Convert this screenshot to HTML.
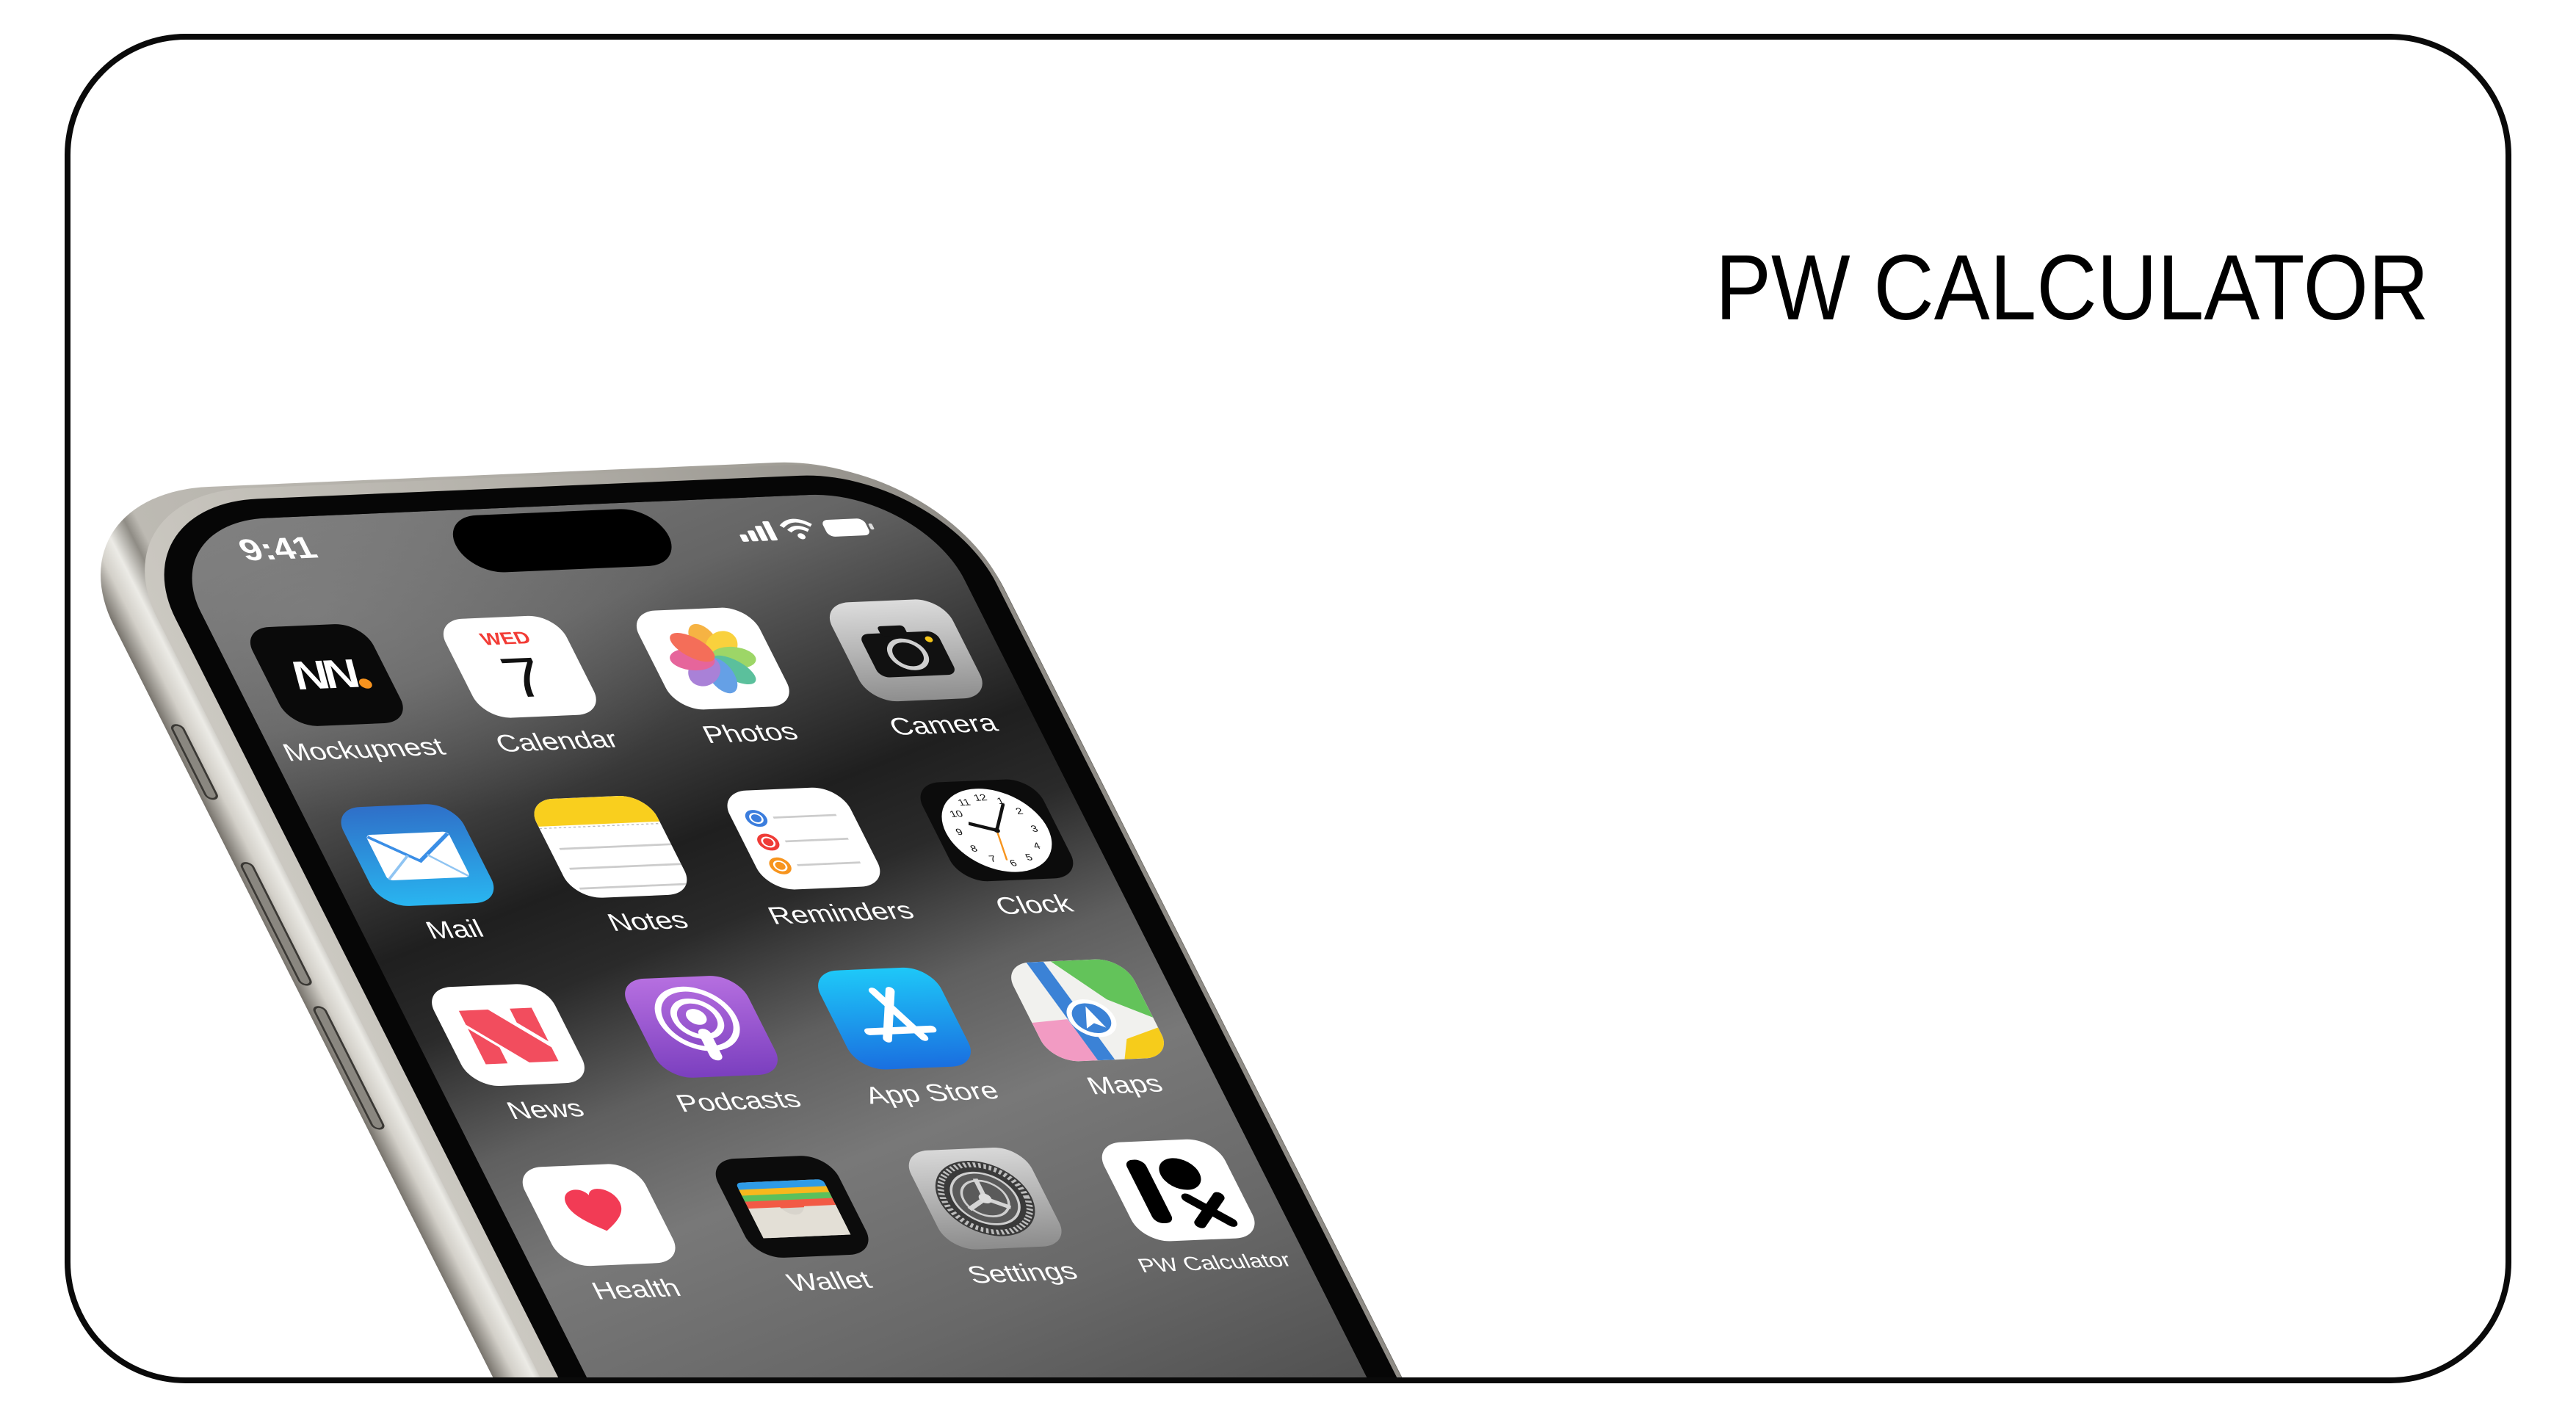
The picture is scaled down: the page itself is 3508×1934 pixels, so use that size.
<!DOCTYPE html>
<html><head><meta charset="utf-8"><style>
html,body{margin:0;padding:0;background:#fff;width:3508px;height:1934px;overflow:hidden;position:relative}
.frame{position:absolute;left:88px;top:46px;width:3332px;height:1838px;box-sizing:border-box;border:8px solid #0a0a0a;border-radius:165px;overflow:hidden;background:#fff}
.title{position:absolute;left:2240px;top:275px;font-family:"Liberation Sans",sans-serif;font-size:126px;line-height:1;color:#000;white-space:nowrap;transform:scaleX(0.905);transform-origin:0 0}
.phone{position:absolute;left:0;top:0;transform:matrix(1,-0.0427,0.412,0.817,116,658);transform-origin:0 0;font-family:"Liberation Sans",sans-serif}
.abs{position:absolute}
.body{left:-125px;top:-55px;width:1212px;height:1950px;border-radius:220px;background:linear-gradient(90deg,#77736c 0%,#d3d0c9 2.5%,#ecebe6 4.5%,#8f8c85 7%,#bdbab3 8.5%,#b0ada6 50%,#9a978f 97%,#6e6b65 100%)}
.rim{left:-62px;top:-50px;width:1148px;height:1950px;border-radius:205px;background:linear-gradient(90deg,#cbc8c1,#b3b0a9 50%,#8f8c86)}
.bezel{left:-38px;top:-32px;width:1118px;height:1900px;border-radius:190px;background:#060606}
.screen{left:0;top:0;width:1040px;height:1850px;border-radius:150px;overflow:hidden;
background:radial-gradient(ellipse 500px 350px at 150px 150px,rgba(140,140,140,.45),rgba(0,0,0,0)),linear-gradient(160deg,#7e7e7e 0%,#656565 16%,#404040 25%,#1f1f1f 33%,#2a2a2a 39%,#5f5f5f 48%,#787878 57%,#686868 70%,#4e4e4e 85%,#383838 100%)}
.ic{position:absolute;width:165px;height:165px;border-radius:38px;overflow:hidden}
.ic svg{width:100%;height:100%;display:block}
.lb{position:absolute;width:320px;text-align:center;color:#fff;font-size:40px;line-height:1;white-space:nowrap}
.btn{position:absolute;background:#8a8780;border:3px solid #3a3834;border-radius:10px;width:12px}
</style></head><body>
<div class="frame">
<div class="title">PW CALCULATOR</div>
<div class="phone">
  <div class="abs body"></div>
  <div class="btn" style="left:-118px;top:330px;height:120px"></div>
  <div class="btn" style="left:-118px;top:560px;height:200px"></div>
  <div class="btn" style="left:-118px;top:800px;height:200px"></div>
  <div class="abs rim"></div>
  <div class="abs bezel"></div>
  <div class="abs screen">
    <div class="abs" style="left:95px;top:22px;color:#fff;font-size:50px;font-weight:bold">9:41</div>
    <div class="abs" style="left:385px;top:10px;width:290px;height:95px;border-radius:48px;background:#000"></div>
    <svg class="abs" style="left:770px;top:30px" width="200" height="50" viewBox="0 0 200 50">
      <rect x="0" y="30" width="9" height="12" rx="2" fill="#fff"/><rect x="13" y="24" width="9" height="18" rx="2" fill="#fff"/><rect x="26" y="17" width="9" height="25" rx="2" fill="#fff"/><rect x="39" y="10" width="9" height="32" rx="2" fill="#fff"/>
      <path d="M62 20 Q82 2 102 20" stroke="#fff" stroke-width="6" fill="none"/><path d="M69 28 Q82 17 95 28" stroke="#fff" stroke-width="6" fill="none"/><circle cx="82" cy="37" r="5" fill="#fff"/>
      <rect x="118" y="12" width="58" height="28" rx="9" fill="#fff"/><rect x="179" y="21" width="5" height="10" rx="2" fill="#ddd"/>
    </svg>

    <div class="ic" style="left:43px;top:178px;background:#0a0a0a"><svg viewBox="0 0 100 100"><text x="47" y="63" text-anchor="middle" font-family="Liberation Sans" font-weight="bold" font-style="italic" font-size="40" fill="#fff" letter-spacing="-4">NN</text><circle cx="78" cy="60" r="5" fill="#f7931e"/></svg></div>
    <div class="lb" style="left:-35px;top:365px">Mockupnest</div>
    <div class="ic" style="left:306px;top:178px;background:#fff"><svg viewBox="0 0 100 100"><text x="50" y="27" text-anchor="middle" font-family="Liberation Sans" font-weight="bold" font-size="17" fill="#f23b35">WED</text><text x="50" y="80" text-anchor="middle" font-family="Liberation Sans" font-size="56" fill="#111">7</text></svg></div>
    <div class="lb" style="left:228px;top:365px">Calendar</div>
    <div class="ic" style="left:569px;top:178px;background:#fff"><svg viewBox="0 0 100 100"><g transform="translate(50 50)" opacity=".85">
      <ellipse cx="0" cy="-17" rx="11" ry="18" fill="#f5a623"/><ellipse cx="0" cy="-17" rx="11" ry="18" fill="#f8c91c" transform="rotate(45)"/><ellipse cx="0" cy="-17" rx="11" ry="18" fill="#8ccf4d" transform="rotate(90)"/><ellipse cx="0" cy="-17" rx="11" ry="18" fill="#3fb58b" transform="rotate(135)"/><ellipse cx="0" cy="-17" rx="11" ry="18" fill="#4a90e2" transform="rotate(180)"/><ellipse cx="0" cy="-17" rx="11" ry="18" fill="#9b6bd1" transform="rotate(225)"/><ellipse cx="0" cy="-17" rx="11" ry="18" fill="#e24b8a" transform="rotate(270)"/><ellipse cx="0" cy="-17" rx="11" ry="18" fill="#f2553d" transform="rotate(315)"/></g></svg></div>
    <div class="lb" style="left:491px;top:365px">Photos</div>
    <div class="ic" style="left:832px;top:178px;background:linear-gradient(180deg,#dcdcdc,#8e8e8e)"><svg viewBox="0 0 100 100"><rect x="18" y="32" width="64" height="44" rx="8" fill="#111"/><rect x="36" y="25" width="22" height="10" rx="3" fill="#111"/><circle cx="50" cy="54" r="14" fill="none" stroke="#cfcfcf" stroke-width="4"/><circle cx="73" cy="40" r="3" fill="#f5c518"/></svg></div>
    <div class="lb" style="left:754px;top:365px">Camera</div>

    <div class="ic" style="left:43px;top:478px;background:linear-gradient(180deg,#2f6fc8,#29b5f0)"><svg viewBox="0 0 100 100"><rect x="16" y="28" width="68" height="46" rx="4" fill="#fff"/><path d="M17 30 L50 56 L83 30" stroke="#3a8ee6" stroke-width="3" fill="none"/><path d="M17 73 L42 50 M83 73 L58 50" stroke="#8fc4f2" stroke-width="2" fill="none"/></svg></div>
    <div class="lb" style="left:-35px;top:665px">Mail</div>
    <div class="ic" style="left:306px;top:478px;background:#fff"><svg viewBox="0 0 100 100"><rect x="0" y="0" width="100" height="27" fill="#f9cf1e"/><line x1="0" y1="29" x2="100" y2="29" stroke="#bbb" stroke-width="1" stroke-dasharray="2 2"/><line x1="8" y1="50" x2="100" y2="50" stroke="#ccc" stroke-width="2"/><line x1="8" y1="70" x2="100" y2="70" stroke="#ccc" stroke-width="2"/><line x1="8" y1="90" x2="100" y2="90" stroke="#ccc" stroke-width="2"/></svg></div>
    <div class="lb" style="left:228px;top:665px">Notes</div>
    <div class="ic" style="left:569px;top:478px;background:#fff"><svg viewBox="0 0 100 100"><circle cx="20" cy="28" r="7" fill="#fff" stroke="#3b7ddd" stroke-width="3"/><circle cx="20" cy="28" r="4" fill="#3b7ddd"/><circle cx="20" cy="52" r="7" fill="#fff" stroke="#ef3b36" stroke-width="3"/><circle cx="20" cy="52" r="4" fill="#ef3b36"/><circle cx="20" cy="76" r="7" fill="#fff" stroke="#f7941d" stroke-width="3"/><circle cx="20" cy="76" r="4" fill="#f7941d"/><line x1="34" y1="28" x2="86" y2="28" stroke="#ccc" stroke-width="2"/><line x1="34" y1="52" x2="86" y2="52" stroke="#ccc" stroke-width="2"/><line x1="34" y1="76" x2="86" y2="76" stroke="#ccc" stroke-width="2"/></svg></div>
    <div class="lb" style="left:491px;top:665px">Reminders</div>
    <div class="ic" style="left:832px;top:478px;background:#0c0c0c"><svg viewBox="0 0 100 100"><circle cx="50" cy="50" r="42" fill="#fff"/><g font-family="Liberation Sans" font-size="9" fill="#111" text-anchor="middle"><text x="50" y="20">12</text><text x="65" y="24">1</text><text x="76" y="35">2</text><text x="81" y="53">3</text><text x="76" y="70">4</text><text x="65" y="81">5</text><text x="50" y="86">6</text><text x="35" y="81">7</text><text x="24" y="70">8</text><text x="19" y="53">9</text><text x="24" y="35">10</text><text x="35" y="24">11</text></g><line x1="50" y1="50" x2="30" y2="42" stroke="#111" stroke-width="3.5"/><line x1="50" y1="50" x2="66" y2="24" stroke="#111" stroke-width="2.5"/><line x1="50" y1="50" x2="46" y2="80" stroke="#f7941d" stroke-width="1.5"/><circle cx="50" cy="50" r="2.5" fill="#111"/></svg></div>
    <div class="lb" style="left:754px;top:665px">Clock</div>

    <div class="ic" style="left:43px;top:778px;background:#fff"><svg viewBox="0 0 100 100"><path d="M20 24 L44 24 L80 64 L80 78 L56 78 L20 38 Z" fill="#f24d5e"/><path d="M20 42 L38 62 L38 78 L20 78Z" fill="#f24d5e"/><path d="M62 24 L80 24 L80 58 L62 38Z" fill="#f24d5e"/></svg></div>
    <div class="lb" style="left:-35px;top:965px">News</div>
    <div class="ic" style="left:306px;top:778px;background:linear-gradient(180deg,#b66fe0,#7b3fbf)"><svg viewBox="0 0 100 100"><circle cx="50" cy="42" r="30" fill="none" stroke="#fff" stroke-width="5"/><circle cx="50" cy="42" r="18" fill="none" stroke="#fff" stroke-width="5"/><circle cx="50" cy="40" r="8" fill="#fff"/><rect x="45" y="52" width="10" height="32" rx="5" fill="#fff"/></svg></div>
    <div class="lb" style="left:228px;top:965px">Podcasts</div>
    <div class="ic" style="left:569px;top:778px;background:linear-gradient(180deg,#1ec8f8,#1a6fe0)"><svg viewBox="0 0 100 100"><path d="M44 22 L66 70 M58 22 L36 70 M24 62 L76 62" stroke="#fff" stroke-width="7" stroke-linecap="round"/></svg></div>
    <div class="lb" style="left:491px;top:965px">App Store</div>
    <div class="ic" style="left:832px;top:778px;background:#f1f1ee"><svg viewBox="0 0 100 100"><path d="M40 0 L100 0 L100 60 L70 40 Z" fill="#63c35a"/><path d="M0 60 L30 58 L40 100 L0 100Z" fill="#f29bc3"/><path d="M70 80 L100 70 L100 100 L60 100Z" fill="#f6cc1b"/><path d="M20 0 L34 0 L52 100 L38 100Z" fill="#3b82d6"/><circle cx="50" cy="58" r="17" fill="#3b82d6" stroke="#fff" stroke-width="4"/><path d="M50 46 L58 68 L50 63 L42 68Z" fill="#fff"/></svg></div>
    <div class="lb" style="left:754px;top:965px">Maps</div>

    <div class="ic" style="left:43px;top:1078px;background:#fff"><svg viewBox="0 0 100 100"><path d="M50 66 C36 56 28 48 28 38 C28 29 35 24 41 24 C46 24 49 27 50 30 C51 27 54 24 59 24 C65 24 72 29 72 38 C72 48 64 56 50 66Z" fill="#f23b55"/></svg></div>
    <div class="lb" style="left:-35px;top:1265px">Health</div>
    <div class="ic" style="left:306px;top:1078px;background:#0c0c0c"><svg viewBox="0 0 100 100"><rect x="14" y="24" width="72" height="56" rx="6" fill="#d8d4cc"/><rect x="14" y="24" width="72" height="10" rx="4" fill="#2f9be6"/><rect x="14" y="31" width="72" height="8" fill="#f7b81d"/><rect x="14" y="37" width="72" height="8" fill="#5cc05c"/><rect x="14" y="43" width="72" height="8" fill="#f25a45"/><path d="M14 50 L40 50 Q44 58 50 58 Q56 58 60 50 L86 50 L86 80 L14 80Z" fill="#e3dfd6"/></svg></div>
    <div class="lb" style="left:228px;top:1265px">Wallet</div>
    <div class="ic" style="left:569px;top:1078px;background:linear-gradient(180deg,#d8d8d8,#8c8c8c)"><svg viewBox="0 0 100 100"><circle cx="50" cy="50" r="38" fill="#3a3a3a"/><circle cx="50" cy="50" r="34" fill="none" stroke="#bdbdbd" stroke-width="5" stroke-dasharray="2 2"/><circle cx="50" cy="50" r="26" fill="#5a5a5a" stroke="#cfcfcf" stroke-width="2"/><circle cx="50" cy="50" r="18" fill="none" stroke="#cfcfcf" stroke-width="2"/><path d="M50 50 L50 30 M50 50 L33 60 M50 50 L67 60" stroke="#d5d5d5" stroke-width="4"/><circle cx="50" cy="50" r="5" fill="#ddd"/></svg></div>
    <div class="lb" style="left:491px;top:1265px">Settings</div>
    <div class="ic" style="left:832px;top:1078px;background:#fff"><svg viewBox="0 0 100 100"><rect x="18" y="18" width="16" height="64" rx="7" fill="#000"/><circle cx="58" cy="34" r="16" fill="#000"/><path d="M54 58 L80 84 M80 58 L54 84" stroke="#000" stroke-width="9" stroke-linecap="round"/></svg></div>
    <div class="lb" style="left:754px;top:1265px;font-size:32px">PW Calculator</div>
  </div>
</div>
</div>
</body></html>
